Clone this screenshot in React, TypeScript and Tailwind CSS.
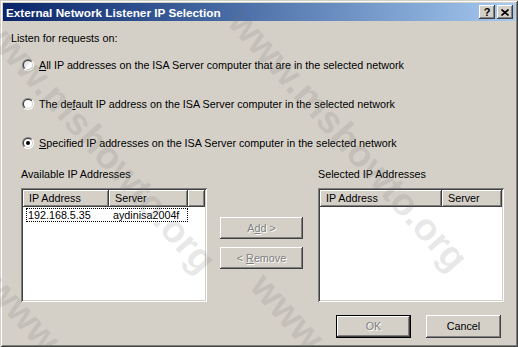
import React from 'react';

const raised =
  'shadow-[inset_-1px_-1px_#404040,inset_1px_1px_#ffffff,inset_-2px_-2px_#808080,inset_2px_2px_#d4d0c8]';
const headerCell = 'shadow-[inset_-1px_-1px_#404040,inset_1px_1px_#ffffff,inset_-2px_-2px_#808080]';
const sunken =
  'shadow-[inset_1px_1px_#808080,inset_-1px_-1px_#ffffff,inset_2px_2px_#404040,inset_-2px_-2px_#d4d0c8]';
const disabledText = 'text-[#808080] [text-shadow:1px_1px_0_#ffffff]';

function Radio({ checked }: { checked?: boolean }) {
  return (
    <svg width="12" height="12" viewBox="0 0 12 12" className="shrink-0">
      <defs>
        <linearGradient id="radioOuter" x1="0" y1="0" x2="1" y2="1">
          <stop offset="0.5" stopColor="#808080" />
          <stop offset="0.5" stopColor="#ffffff" />
        </linearGradient>
        <linearGradient id="radioInner" x1="0" y1="0" x2="1" y2="1">
          <stop offset="0.5" stopColor="#404040" />
          <stop offset="0.5" stopColor="#d4d0c8" />
        </linearGradient>
      </defs>
      <circle cx="6" cy="6" r="6" fill="url(#radioOuter)" />
      <circle cx="6" cy="6" r="5" fill="url(#radioInner)" />
      <circle cx="6" cy="6" r="4" fill="#ffffff" />
      {checked && <circle cx="6" cy="6" r="2" fill="#000000" />}
    </svg>
  );
}

function ListBox({ cols, rows }: { cols: { label: string; w: string }[]; rows: string[][] }) {
  return (
    <div className={`h-[114px] bg-white p-[2px] ${sunken}`}>
      <div className="flex h-[17px] bg-[#d4d0c8]">
        {cols.map((c) => (
          <div key={c.label} className={`${c.w} flex items-center pl-[6px] ${headerCell}`}>
            {c.label}
          </div>
        ))}
        <div className={`flex-1 ${headerCell}`} />
      </div>
      {rows.map((r) => (
        <div
          key={r[0]}
          className="ml-[3px] mt-[1px] flex h-[14px] w-[162px] items-center overflow-hidden border border-dotted border-black"
        >
          <span className="w-[86px] shrink-0 pl-[1px]">{r[0]}</span>
          <span className="whitespace-nowrap">{r[1]}</span>
        </div>
      ))}
    </div>
  );
}

// faint diagonal site watermark lying over the dialog
function Watermarks() {
  const mark =
    "pointer-events-none absolute origin-top-left rotate-[48deg] whitespace-nowrap font-['Liberation_Sans',Arial,sans-serif] text-[38px] font-bold leading-none text-[rgba(110,110,110,0.17)]";
  return (
    <>
      <div className={`${mark} left-[-2px] top-[4px]`}>www.mshowto.org</div>
      <div className={`${mark} left-[250px] top-[2px]`}>www.mshowto.org</div>
      <div className={`${mark} left-[8px] top-[268px]`}>www.mshowto.org</div>
      <div className={`${mark} left-[272px] top-[266px]`}>www.mshowto.org</div>
    </>
  );
}

export default function App() {
  return (
    <div className="relative h-[347px] w-[518px] overflow-hidden bg-[#d4d0c8] p-[3px] font-['Liberation_Sans',Arial,sans-serif] text-[10.75px] leading-[13px] text-black shadow-[inset_1px_1px_#d4d0c8,inset_-1px_-1px_#404040,inset_2px_2px_#ffffff,inset_-2px_-2px_#808080]">
      {/* title bar */}
      <div className="flex h-[18px] items-center bg-linear-to-r from-[#0a246a] to-[#a6caf0] pl-[3px] pr-[2px]">
        <span className="flex-1 text-[11.75px] font-bold text-white">External Network Listener IP Selection</span>
        <div className={`flex h-[14px] w-[16px] items-center justify-center bg-[#d4d0c8] text-[11px] font-bold ${raised}`}>
          ?
        </div>
        <div className={`ml-[2px] flex h-[14px] w-[16px] items-center justify-center bg-[#d4d0c8] ${raised}`}>
          <svg width="8" height="7" viewBox="0 0 8 7">
            <path d="M0.5 0.5 L7.5 6.5 M7.5 0.5 L0.5 6.5" stroke="#000" strokeWidth="1.6" />
          </svg>
        </div>
      </div>

      <div className="flex flex-col">
        <div className="ml-[8px] mt-[11px]">Listen for requests on:</div>

        <div className="ml-[19px] mt-[13px] flex flex-col gap-[25px]">
          <div className="flex h-[14px] items-center gap-[5px]">
            <Radio />
            <span>
              <u>A</u>ll IP addresses on the ISA Server computer that are in the selected network
            </span>
          </div>
          <div className="flex h-[14px] items-center gap-[5px]">
            <Radio />
            <span>
              The de<u>f</u>ault IP address on the ISA Server computer in the selected network
            </span>
          </div>
          <div className="flex h-[14px] items-center gap-[5px]">
            <Radio checked />
            <span>
              <u>S</u>pecified IP addresses on the ISA Server computer in the selected network
            </span>
          </div>
        </div>

        <div className="ml-[18px] mt-[18px] flex">
          <div className="w-[186px]">
            <div className="h-[13px]">Available IP Addresses</div>
            <div className="mt-[7px]">
              <ListBox
                cols={[
                  { label: 'IP Address', w: 'w-[86px]' },
                  { label: 'Server', w: 'w-[79px]' },
                ]}
                rows={[['192.168.5.35', 'aydinisa2004f']]}
              />
            </div>
          </div>

          <div className="ml-[13px] flex w-[83px] flex-col gap-[8px] pt-[49px]">
            <div className={`flex h-[22px] items-center justify-center ${raised} ${disabledText}`}>
              <span>
                A<u>d</u>d &gt;
              </span>
            </div>
            <div className={`flex h-[22px] items-center justify-center ${raised} ${disabledText}`}>
              <span>
                &lt; <u>R</u>emove
              </span>
            </div>
          </div>

          <div className="ml-[15px] w-[186px]">
            <div className="h-[13px]">Selected IP Addresses</div>
            <div className="mt-[7px]">
              <ListBox
                cols={[
                  { label: 'IP Address', w: 'w-[122px]' },
                  { label: 'Server', w: 'w-[60px]' },
                ]}
                rows={[]}
              />
            </div>
          </div>
        </div>

        <div className="mt-[13px] flex justify-end gap-[15px] pr-[14px]">
          <div className="h-[23px] w-[75px] border border-black">
            <div className={`flex h-full items-center justify-center ${raised} ${disabledText}`}>OK</div>
          </div>
          <div className={`flex h-[23px] w-[75px] items-center justify-center ${raised}`}>Cancel</div>
        </div>
      </div>

      <Watermarks />
    </div>
  );
}
